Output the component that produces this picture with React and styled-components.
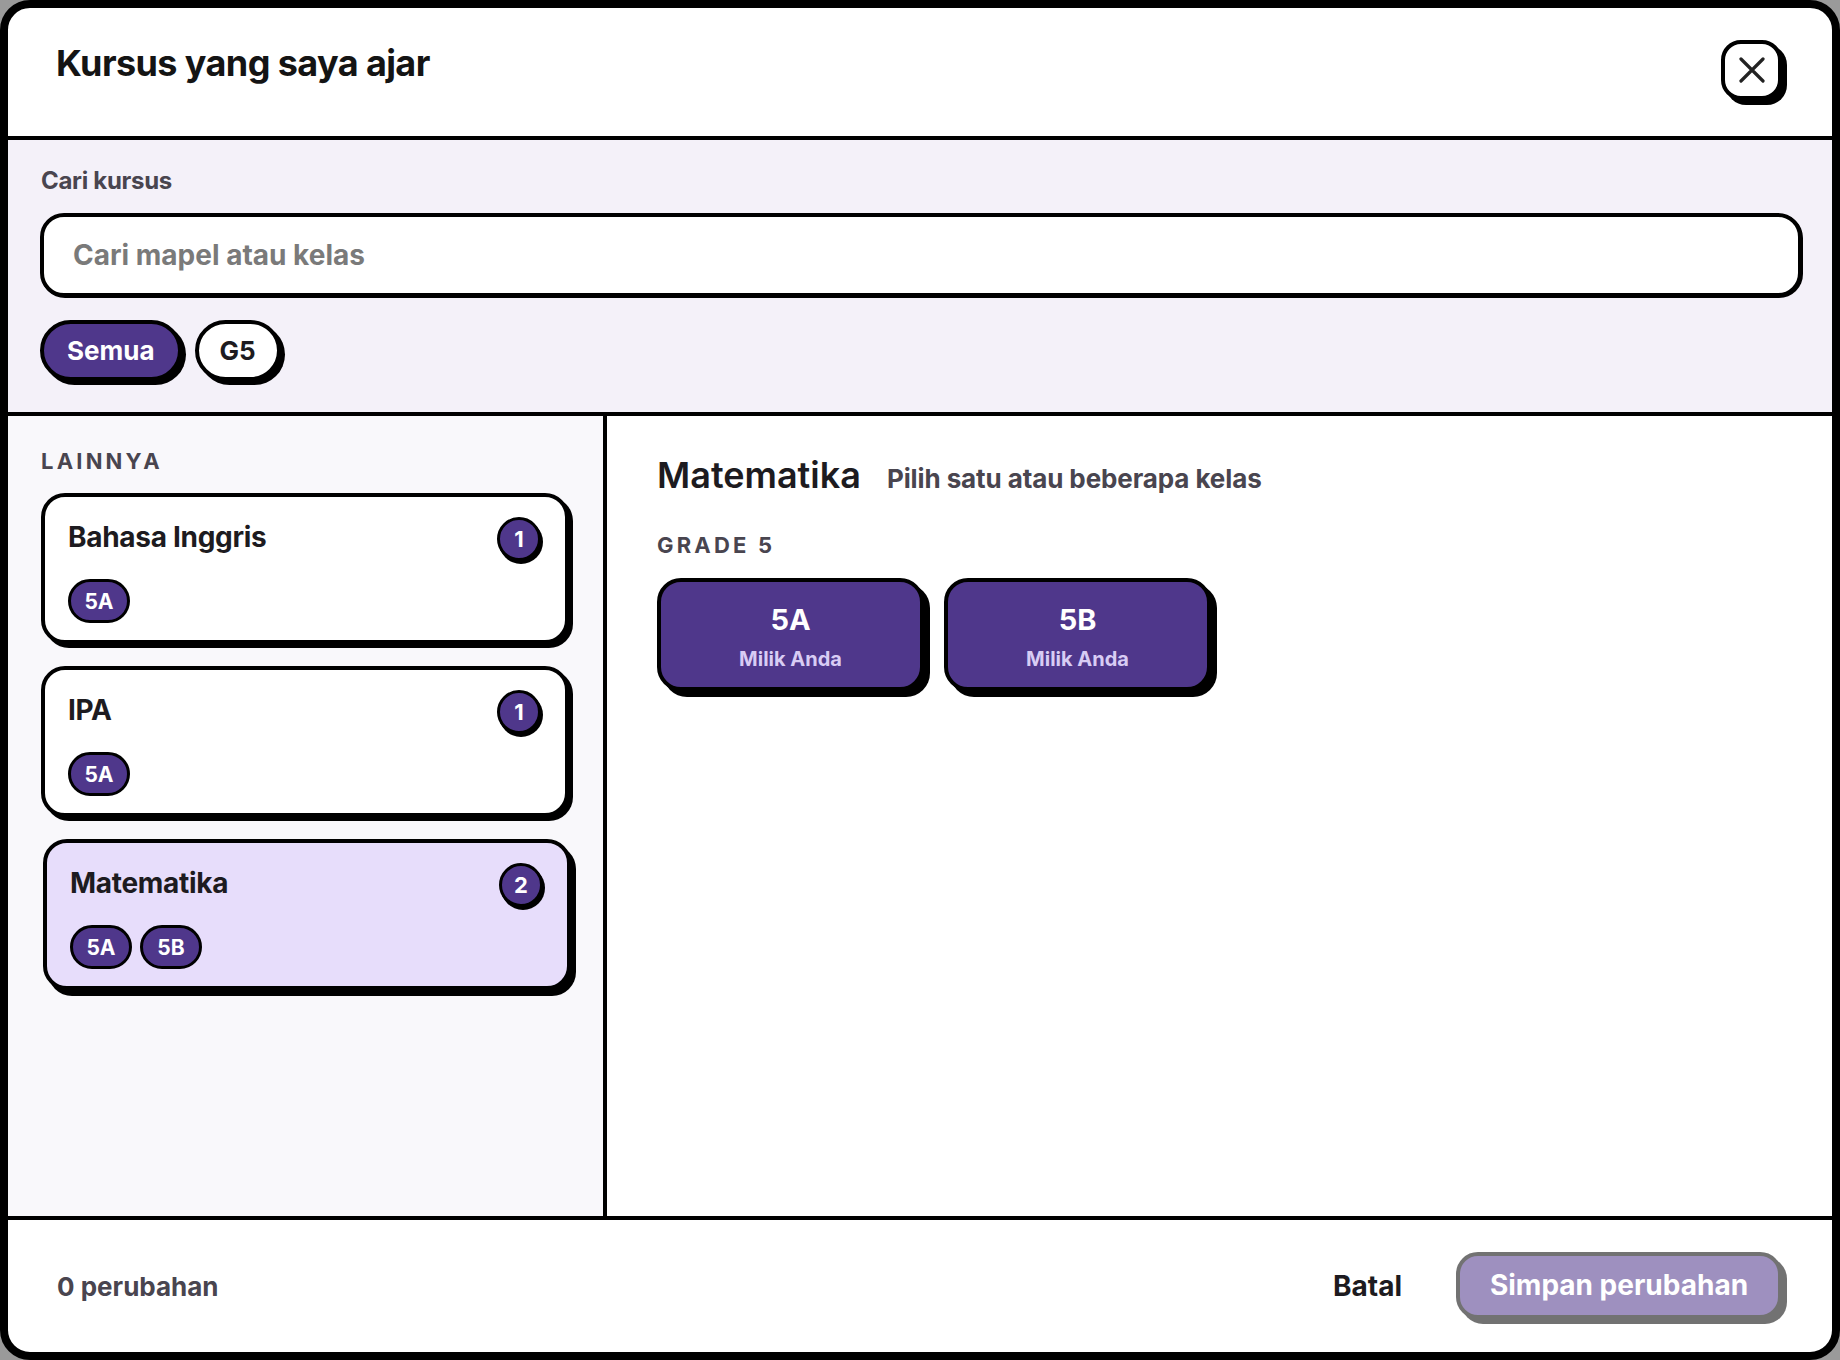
import React from "react";
import styled, { createGlobalStyle } from "styled-components";

const GlobalStyle = createGlobalStyle`
  * { box-sizing: border-box; }
  body {
    margin: 0;
    background: #9a9a9a;
    font-family: Inter, "Noto Sans", "Liberation Sans", sans-serif;
  }
`;

const purple = "#4f378b";

const courses = [
  { name: "Bahasa Inggris", count: 1, classes: ["5A"] },
  { name: "IPA", count: 1, classes: ["5A"] },
  { name: "Matematika", count: 2, classes: ["5A", "5B"], selected: true },
];

const App = () => {
  return (
    <>
      <GlobalStyle />
      <Modal>
        <Header>
          <Title>Kursus yang saya ajar</Title>
          <CloseButton aria-label="Tutup">
            <svg width="26" height="26" viewBox="0 0 26 26">
              <path
                d="M2 2 L24 24 M24 2 L2 24"
                stroke="#222"
                strokeWidth="3.2"
                strokeLinecap="round"
              />
            </svg>
          </CloseButton>
        </Header>

        <SearchSection>
          <FieldLabel>Cari kursus</FieldLabel>
          <SearchInput placeholder="Cari mapel atau kelas" />
          <FilterRow>
            <FilterChip $active>Semua</FilterChip>
            <FilterChip>G5</FilterChip>
          </FilterRow>
        </SearchSection>

        <Main>
          <Sidebar>
            <SectionLabel>LAINNYA</SectionLabel>
            <CourseList>
              {courses.map((c) => (
                <CourseCard key={c.name} $selected={c.selected}>
                  <CardTop>
                    <CourseName>{c.name}</CourseName>
                    <CountBadge>{c.count}</CountBadge>
                  </CardTop>
                  <TagRow>
                    {c.classes.map((k) => (
                      <ClassTag key={k}>{k}</ClassTag>
                    ))}
                  </TagRow>
                </CourseCard>
              ))}
            </CourseList>
          </Sidebar>

          <Detail>
            <DetailHeading>
              <SubjectTitle>Matematika</SubjectTitle>
              <Hint>Pilih satu atau beberapa kelas</Hint>
            </DetailHeading>
            <GradeLabel>GRADE 5</GradeLabel>
            <ClassGrid>
              <ClassButton>
                <span className="code">5A</span>
                <span className="owner">Milik Anda</span>
              </ClassButton>
              <ClassButton>
                <span className="code">5B</span>
                <span className="owner">Milik Anda</span>
              </ClassButton>
            </ClassGrid>
          </Detail>
        </Main>

        <Footer>
          <Changes>0 perubahan</Changes>
          <FooterActions>
            <CancelButton>Batal</CancelButton>
            <SaveButton disabled>Simpan perubahan</SaveButton>
          </FooterActions>
        </Footer>
      </Modal>
    </>
  );
};

const Modal = styled.div`
  width: 1840px;
  height: 1360px;
  border: 8px solid #000;
  border-radius: 30px;
  background: #fff;
  overflow: hidden;
  display: flex;
  flex-direction: column;
`;

const Header = styled.header`
  flex: none;
  height: 132px;
  border-bottom: 4px solid #000;
  display: flex;
  justify-content: space-between;
  align-items: flex-start;
  padding: 32px 50px 0 48px;
`;

const Title = styled.h1`
  margin: 1px 0 0;
  font-size: 36px;
  line-height: 44px;
  font-weight: 700;
  color: #141414;
  letter-spacing: -0.6px;
`;

const CloseButton = styled.button`
  width: 61px;
  height: 60px;
  border: 4px solid #000;
  border-radius: 20px;
  background: #fff;
  box-shadow: 5px 5px 0 #000;
  display: flex;
  align-items: center;
  justify-content: center;
  padding: 0;
  cursor: pointer;
`;

const SearchSection = styled.section`
  flex: none;
  height: 276px;
  border-bottom: 4px solid #000;
  background: #f4f1f9;
  padding: 26px 30px 0 32px;
  display: flex;
  flex-direction: column;
`;

const FieldLabel = styled.label`
  font-size: 24px;
  line-height: 29px;
  font-weight: 700;
  color: #49454f;
  padding-left: 1px;
  letter-spacing: -0.3px;
`;

const SearchInput = styled.input`
  margin-top: 18px;
  height: 84px;
  width: 100%;
  border: 4px solid #000;
  box-shadow: 1px 1px 0 #000;
  border-radius: 24px;
  background: #fff;
  padding: 0 29px;
  font-family: inherit;
  font-size: 28px;
  font-weight: 700;
  color: #1d1b20;
  outline: none;
  &::placeholder {
    color: #7a7a7a;
  }
`;

const FilterRow = styled.div`
  margin-top: 23px;
  display: flex;
  gap: 13px;
`;

const FilterChip = styled.button`
  height: 61px;
  padding: 0 ${(p) => (p.$active ? "23px" : "21px")};
  border: 4px solid #000;
  border-radius: 999px;
  box-shadow: 4px 4px 0 #000;
  background: ${(p) => (p.$active ? purple : "#fff")};
  color: ${(p) => (p.$active ? "#fff" : "#1d1b20")};
  font-family: inherit;
  font-size: 26px;
  font-weight: 700;
  cursor: pointer;
`;

const Main = styled.div`
  flex: 1;
  display: flex;
  border-bottom: 4px solid #000;
  min-height: 0;
`;

const Sidebar = styled.aside`
  flex: none;
  width: 599px;
  border-right: 4px solid #000;
  background: #f9f8fb;
  padding: 31px 34px 0 33px;
`;

const SectionLabel = styled.div`
  font-size: 22px;
  line-height: 28px;
  font-weight: 700;
  letter-spacing: 3.2px;
  color: #49454f;
`;

const CourseList = styled.div`
  margin-top: 18px;
  display: flex;
  flex-direction: column;
  gap: 22px;
`;

const CourseCard = styled.div`
  border: 4px solid #000;
  border-radius: 24px;
  background: ${(p) => (p.$selected ? "#e7ddfb" : "#fff")};
  box-shadow: ${(p) => (p.$selected ? "5px 6px 0 #000" : "4px 4px 0 #000")};
  transform: ${(p) => (p.$selected ? "translateX(2px)" : "none")};
  padding: 20px 24px 17px 23px;
  display: flex;
  flex-direction: column;
  gap: 18px;
`;

const CardTop = styled.div`
  display: flex;
  align-items: center;
  justify-content: space-between;
  height: 44px;
`;

const CourseName = styled.div`
  font-size: 28px;
  font-weight: 700;
  color: #1d1b20;
  margin-top: -5px;
  letter-spacing: -0.3px;
`;

const CountBadge = styled.div`
  width: 44px;
  height: 44px;
  border-radius: 50%;
  border: 3px solid #000;
  box-shadow: 2px 3px 0 #000;
  background: ${purple};
  color: #fff;
  font-size: 22px;
  font-weight: 700;
  display: flex;
  align-items: center;
  justify-content: center;
`;

const TagRow = styled.div`
  display: flex;
  gap: 8px;
`;

const ClassTag = styled.span`
  height: 44px;
  min-width: 62px;
  padding: 0 12px;
  border: 3px solid #000;
  border-radius: 999px;
  background: ${purple};
  color: #fff;
  font-size: 21px;
  font-weight: 700;
  display: inline-flex;
  align-items: center;
  justify-content: center;
`;

const Detail = styled.section`
  flex: 1;
  background: #fff;
  padding: 38px 50px 0;
`;

const DetailHeading = styled.div`
  display: flex;
  align-items: baseline;
  gap: 26px;
`;

const SubjectTitle = styled.h2`
  margin: 0;
  font-size: 36px;
  line-height: 42px;
  font-weight: 600;
  color: #1d1b20;
`;

const Hint = styled.span`
  font-size: 26px;
  font-weight: 700;
  color: #49454f;
  letter-spacing: -0.1px;
`;

const GradeLabel = styled.div`
  margin-top: 35px;
  font-size: 22px;
  line-height: 28px;
  font-weight: 700;
  letter-spacing: 3.2px;
  color: #49454f;
`;

const ClassGrid = styled.div`
  margin-top: 19px;
  display: flex;
  gap: 20px;
`;

const ClassButton = styled.button`
  width: 267px;
  height: 113px;
  border: 4px solid #000;
  border-radius: 24px;
  box-shadow: 6px 6px 0 #000;
  background: ${purple};
  display: flex;
  flex-direction: column;
  align-items: center;
  justify-content: center;
  gap: 8px;
  padding: 4px 0 0;
  font-family: inherit;
  cursor: pointer;
  .code {
    font-size: 29px;
    line-height: 36px;
    font-weight: 700;
    color: #fff;
  }
  .owner {
    font-size: 20px;
    line-height: 26px;
    font-weight: 700;
    color: #d8ccf4;
  }
`;

const Footer = styled.footer`
  flex: none;
  height: 132px;
  display: flex;
  align-items: center;
  justify-content: space-between;
  padding: 0 50px 0 49px;
`;

const Changes = styled.div`
  font-size: 26px;
  font-weight: 700;
  color: #49454f;
`;

const FooterActions = styled.div`
  display: flex;
  align-items: center;
  gap: 54px;
`;

const CancelButton = styled.button`
  border: none;
  background: none;
  padding: 0;
  font-family: inherit;
  font-size: 28px;
  font-weight: 700;
  color: #1d1b20;
  cursor: pointer;
`;

const SaveButton = styled.button`
  height: 67px;
  width: 326px;
  border: 4px solid #000;
  border-radius: 22px;
  box-shadow: 5px 5px 0 #000;
  background: ${purple};
  color: #fff;
  font-family: inherit;
  font-size: 28px;
  font-weight: 700;
  opacity: 0.55;
  margin-top: -2px;
`;

export default App;
